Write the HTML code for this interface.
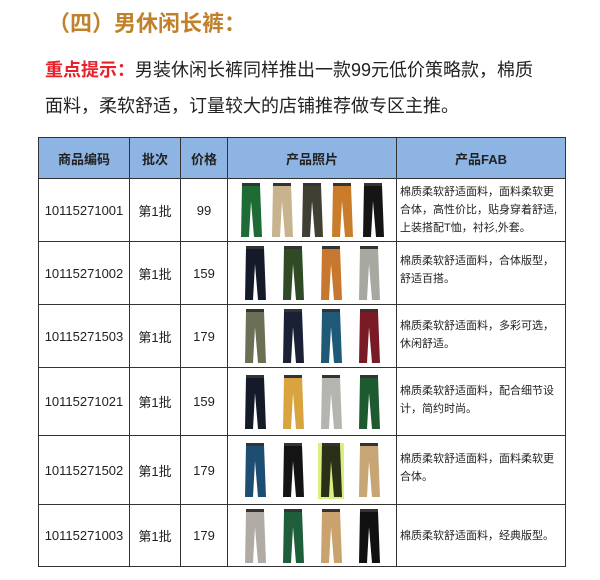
<!DOCTYPE html>
<html><head><meta charset="utf-8"><style>
body{margin:0;width:600px;height:580px;background:#fff;font-family:"Liberation Sans","Noto Sans CJK SC",sans-serif;position:relative;overflow:hidden}
.t{position:absolute;left:48px;top:6px;font-size:22px;font-weight:bold;color:#c0812a}
.p{position:absolute;left:45px;top:52px;font-size:18px;line-height:36px;color:#222;width:505px}
.p b{color:#e8202a}
table{position:absolute;left:38px;top:137px;border-collapse:collapse;font-size:13px;color:#222}
td,th{border:1px solid #333;text-align:center;padding:0}
th{background:#8db4e2;height:40px;font-size:13px}
td.f{text-align:left;font-size:11px;line-height:18px;padding:0 3px;vertical-align:middle}
.ph{display:flex;justify-content:space-around;align-items:center;padding:0 8px}
svg{display:block}
</style></head><body>
<div class="t">（四）男休闲长裤：</div>
<div class="p"><b>重点提示：</b>男装休闲长裤同样推出一款99元低价策略款，棉质面料，柔软舒适，订量较大的店铺推荐做专区主推。</div>
<table>
<tr><th style="width:90px">商品编码</th><th style="width:50px">批次</th><th style="width:46px">价格</th><th style="width:168px">产品照片</th><th style="width:168px">产品FAB</th></tr>
<tr style="height:63px"><td>10115271001</td><td>第1批</td><td>99</td><td><div class="ph" id="r1"></div></td><td class="f">棉质柔软舒适面料，面料柔软更合体，高性价比，贴身穿着舒适,上装搭配T恤，衬衫,外套。</td></tr>
<tr style="height:63px"><td>10115271002</td><td>第1批</td><td>159</td><td><div class="ph" id="r2"></div></td><td class="f" style="vertical-align:top;padding-top:10px">棉质柔软舒适面料，合体版型，舒适百搭。</td></tr>
<tr style="height:63px"><td>10115271503</td><td>第1批</td><td>179</td><td><div class="ph" id="r3"></div></td><td class="f" style="vertical-align:top;padding-top:12px">棉质柔软舒适面料，多彩可选，休闲舒适。</td></tr>
<tr style="height:68px"><td>10115271021</td><td>第1批</td><td>159</td><td><div class="ph" id="r4"></div></td><td class="f" style="vertical-align:top;padding-top:14px">棉质柔软舒适面料，配合细节设计，简约时尚。</td></tr>
<tr style="height:69px"><td>10115271502</td><td>第1批</td><td>179</td><td><div class="ph" id="r5"></div></td><td class="f" style="vertical-align:top;padding-top:14px">棉质柔软舒适面料，面料柔软更合体。</td></tr>
<tr style="height:62px"><td>10115271003</td><td>第1批</td><td>179</td><td><div class="ph" id="r6"></div></td><td class="f">棉质柔软舒适面料，经典版型。</td></tr>
</table>
<script>
var rows={r1:['#1e6b35','#c9b28e','#3f3f33','#c97d2a','#151515'],r2:['#141a2a','#2f4a25','#c8782e','#a8a8a0'],r3:['#6a7055','#1a2035','#1e5a78','#7a1a25'],r4:['#141a2a','#d9a440','#b5b5b0','#1d5a30'],r5:['#1d4e72','#141414','#2a3018','#c8a574'],r6:['#b0aca5','#1e5e3a','#c9a26e','#111']};
for(var k in rows){var h='';rows[k].forEach(function(c,i){var bg=(k=='r5'&&i==2)?'<rect x="0" y="2" width="26" height="56" fill="#d8f080"/>':'';h+='<svg width="26" height="58" viewBox="0 0 26 58">'+bg+'<path d="M4 4 L22 4 L24 56 L16 56 L13 20 L11 56 L3 56 Z" fill="'+c+'"/><rect x="4" y="2" width="18" height="3" fill="#333"/></svg>';});document.getElementById(k).innerHTML=h;}
</script>
</body></html>
